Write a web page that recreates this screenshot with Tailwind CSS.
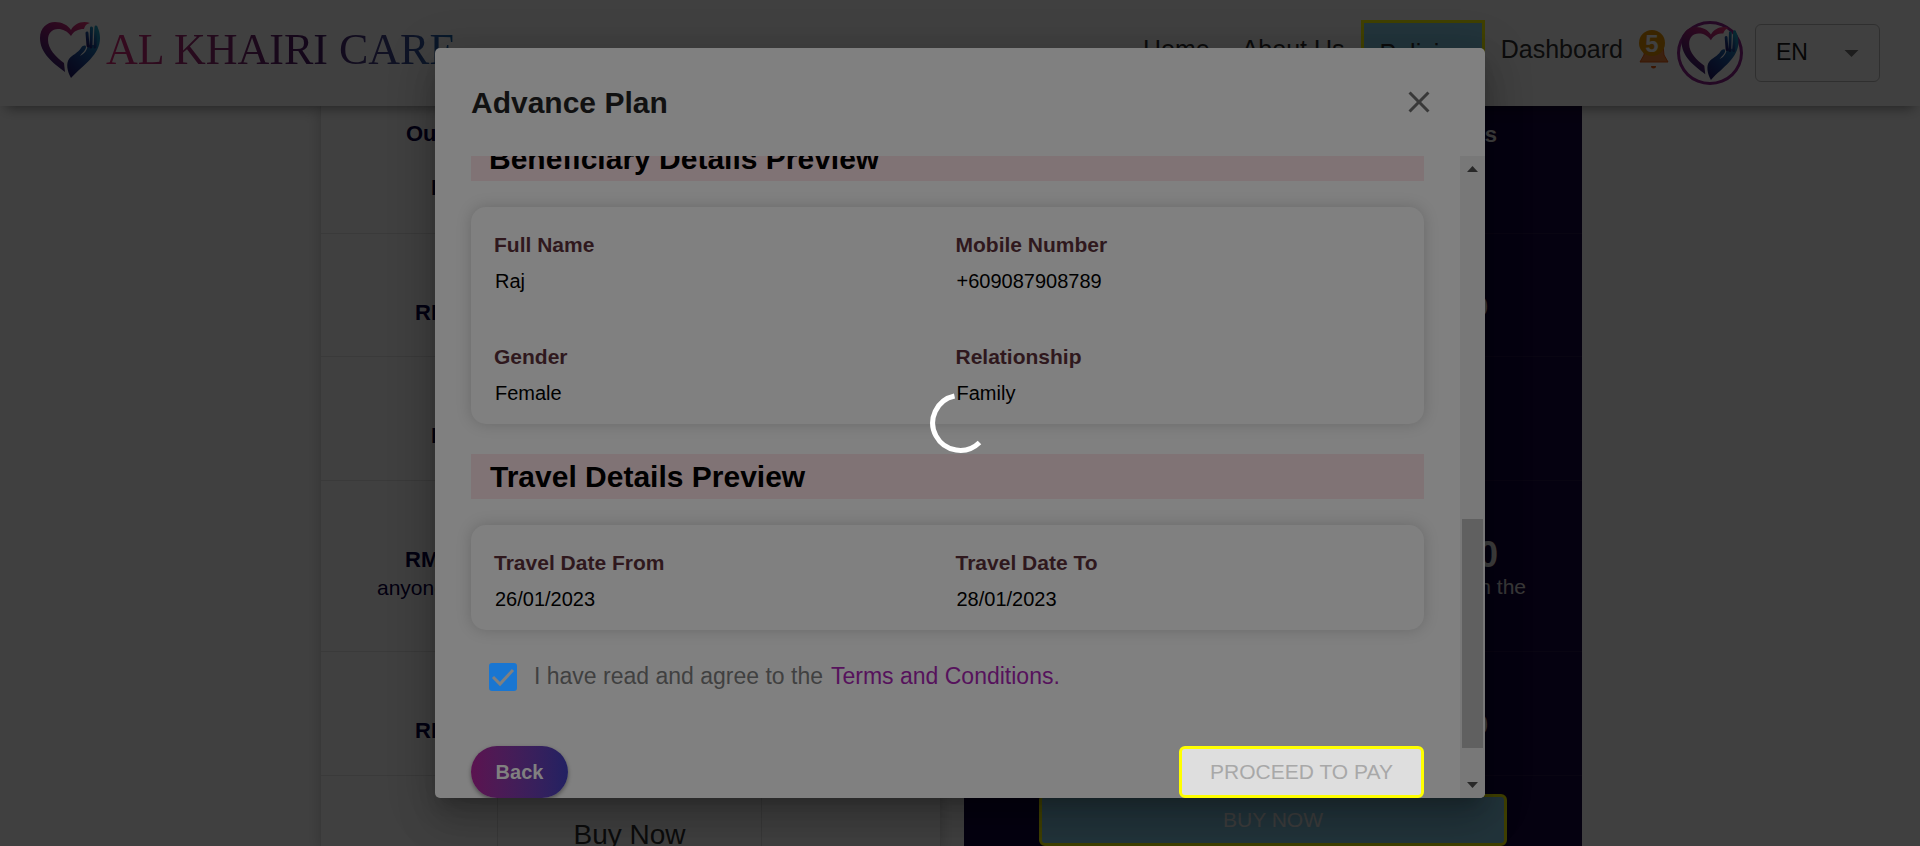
<!DOCTYPE html>
<html lang="en">
<head>
<meta charset="utf-8">
<title>Al Khairi Care</title>
<script src="https://cdn.jsdelivr.net/npm/@tailwindcss/browser@4"></script>
</head>
<body class="relative h-screen overflow-hidden bg-white font-['Liberation_Sans',Arial,sans-serif]">

<svg class="absolute size-0" aria-hidden="true">
  <defs>
    <linearGradient id="heartLeft" x1="1" y1="0" x2="0.3" y2="1">
      <stop offset="0" stop-color="#f03a78"/><stop offset="0.45" stop-color="#a0207c"/><stop offset="1" stop-color="#2b2270"/>
    </linearGradient>
    <linearGradient id="heartRight" x1="0.8" y1="0" x2="0.2" y2="1">
      <stop offset="0" stop-color="#22a0c4"/><stop offset="0.5" stop-color="#1d56a4"/><stop offset="1" stop-color="#201a6c"/>
    </linearGradient>
    <symbol id="mark" viewBox="0 0 60 57">
      <path fill="url(#heartLeft)" d="M31 15 C27 10 23 8 18 8 C12 8 8 12 8 19 C8 28 16 36 24 42 L25 51 C13 42 0 32 0 17 C0 7 7 1 15 1 C22 1 28 4 31 9 C34 3 42 -1 50 2 C46 3 45 5 44 8 C38 8 34 10 31 15 Z"/>
      <path fill="url(#heartRight)" d="M31 57 C27 50 26 42 29 38 C32 34 38 32 41 27 C43 24 46 24 46 26 C46 29 43 31 40 35 C46 32 47 28 48 24 L54 24 L55 6 C56 3 60 8 60 17 C60 34 44 43 31 57 Z"/>
      <path fill="none" stroke="url(#heartRight)" stroke-width="3" stroke-linecap="round" d="M47 12 L48 25 M51.500 7 L51 26 M56 6 L55 26"/>
    </symbol>
  </defs>
</svg>

<!-- Page behind the dialog -->
<div class="flex h-full flex-col overflow-hidden">
  <header class="relative z-10 flex h-[106px] shrink-0 items-start justify-between bg-white pr-10 pl-10 shadow-[0_8px_12px_-6px_rgba(0,0,0,0.45)]">
    <a href="#" class="flex pt-[21px]" aria-label="Al Khairi Care">
      <svg class="h-[57px] w-[60px]"><use href="#mark"/></svg>
      <span class="bg-linear-to-r from-[#e0287a] via-[#4a1a66] via-60% to-[#1668b0] bg-clip-text pl-1.5 font-['Liberation_Serif',serif] text-[44px] leading-[58px] font-normal text-transparent">AL KHAIRI CARE</span>
    </a>
    <nav class="flex items-start text-[25px] leading-8 text-[#333]">
      <a href="#" class="mt-[33px]">Home</a>
      <a href="#" class="mt-[33px] ml-8">About Us</a>
      <a href="#" class="mt-5 ml-4 border-[3px] border-[#ff0] bg-[#87ceeb] px-4 py-3.5">Policies</a>
      <a href="#" class="mt-[33px] ml-4">Dashboard</a>
      <button type="button" class="relative mt-[30px] ml-4 h-10 w-[30px]" aria-label="5 notifications">
        <svg class="h-10 w-[30px]" viewBox="0 0 30 40"><path d="M6 15h18l1 10 4 7H1l4-7z" fill="#f0843c" stroke="#e8590c"/><path d="M12 36h5a2.500 2.500 0 0 1-5 0z" fill="#e8590c"/></svg>
        <span class="absolute top-0 left-0 size-[26px] rounded-full bg-[#e59400] text-center text-2xl leading-[28px] font-bold text-white">5</span>
      </button>
      <a href="#" class="mt-[21px] ml-2 flex h-16 w-[66px] items-center justify-center rounded-[50%] border-[3px] border-[#8e248e]" aria-label="Profile">
        <svg class="h-[54px] w-[58px]"><use href="#mark"/></svg>
      </a>
      <div class="relative mt-6 ml-3">
        <select aria-label="Language" class="block h-[58px] w-[125px] appearance-none rounded-md border border-[#bbb] bg-transparent pb-0.5 pl-5 text-[23px] text-[#1a1a1a]"><option>EN</option></select>
        <svg class="pointer-events-none absolute top-[26px] right-[21px] h-[7px] w-[15px]" viewBox="0 0 14 7"><path d="M0 0h14l-7 7z" fill="#757575"/></svg>
      </div>
    </nav>
  </header>

  <main class="mx-auto flex w-full max-w-[1280px] flex-1 gap-[23px] text-[22px] leading-7 text-[#0c0044]">
    <section class="grid w-[621px] shrink-0 grid-rows-[128px_123px_124px_171px_124px_1fr] divide-y divide-[#e8e8e8] border-x border-[#e4e4e4] shadow-[0_0_14px_rgba(0,0,0,0.2)]">
      <div class="pt-3.5 font-bold"><p class="pl-[85px]">Ou</p><p class="pt-[26px] pl-[110px]">R</p></div>
      <div class="pt-[65px] pl-[94px] font-bold">RM</div>
      <div class="pt-[65px] pl-[110px] font-bold">R</div>
      <div class="pt-[65px] pl-[84px] font-bold">RM<p class="-ml-7 text-[21px] font-normal">anyone</p></div>
      <div class="pt-[65px] pl-[94px] font-bold">RM</div>
      <div class="grid grid-cols-[177px_264px_1fr] divide-x divide-[#e4e4e4]"><div></div><div class="pt-[45px] text-center text-[28px] text-[#333]"><a href="#">Buy Now</a></div><div></div></div>
    </section>
    <section class="grid w-[618px] shrink-0 grid-rows-[128px_123px_124px_171px_124px_1fr] divide-y divide-[#24154a] bg-[#170640] text-right text-white">
      <div class="pt-[15px] pr-[85px] font-bold">s</div>
      <div class="pt-[59px] pr-[94px] text-[28px] font-bold">0</div>
      <div></div>
      <div class="pt-[54px] font-bold"><p class="pr-[84px] text-4xl">0</p><p class="-mt-0.5 pr-14 text-[21px] leading-7 font-normal text-[#e0e0e0]">in the</p></div>
      <div class="pt-[59px] pr-[94px] text-[28px] font-bold">0</div>
      <div class="px-[75px] pt-[18px]"><button type="button" class="h-[52px] w-full rounded-md border-[3px] border-[#ff0] bg-[#87ceeb] text-[21px] text-[#f4f4f4]">BUY NOW</button></div>
    </section>
  </main>
</div>

<!-- Backdrop and dialog -->
<div class="absolute inset-0 z-20 flex items-center justify-center bg-black/75">
  <div role="dialog" aria-labelledby="plan" class="flex h-[750px] w-[1050px] flex-col overflow-hidden rounded-[5px] bg-[#808080] shadow-[0_11px_15px_-7px_rgba(0,0,0,0.2),0_24px_38px_3px_rgba(0,0,0,0.14),0_9px_46px_8px_rgba(0,0,0,0.12)]">
    <div class="flex h-[108px] shrink-0 items-center justify-between pr-12 pl-9">
      <h2 id="plan" class="pt-0.5 text-[30px] leading-9 font-bold text-[#111]">Advance Plan</h2>
      <button type="button" aria-label="Close"><svg class="size-9" viewBox="0 0 24 24" fill="#383838"><path d="M19 6.41 17.59 5 12 10.59 6.41 5 5 6.41 10.59 12 5 17.59 6.41 19 12 13.41 17.59 19 19 17.59 13.41 12z"/></svg></button>
    </div>
    <div class="flex min-h-0 flex-1">
      <div class="flex min-w-0 flex-1 flex-col justify-end overflow-hidden px-9">
        <h3 class="h-[45px] shrink-0 bg-[#807375] pl-[18px] text-[30px] leading-[45px] font-bold">Beneficiary Details Preview</h3>
        <dl class="mt-[26px] grid shrink-0 grid-cols-2 gap-y-10 rounded-[15px] bg-[#808080] pt-6 pr-[7px] pb-[9px] pl-[23px] shadow-[0_0_15px_rgba(0,0,0,0.18)]">
          <div><dt class="text-[21px] leading-7 font-bold text-[#2f181d]">Full Name</dt><dd class="py-[3px] pl-px text-xl leading-[38px]">Raj</dd></div>
          <div><dt class="text-[21px] leading-7 font-bold text-[#2f181d]">Mobile Number</dt><dd class="py-[3px] pl-px text-xl leading-[38px]">+609087908789</dd></div>
          <div><dt class="text-[21px] leading-7 font-bold text-[#2f181d]">Gender</dt><dd class="py-[3px] pl-px text-xl leading-[38px]">Female</dd></div>
          <div><dt class="text-[21px] leading-7 font-bold text-[#2f181d]">Relationship</dt><dd class="py-[3px] pl-px text-xl leading-[38px]">Family</dd></div>
        </dl>
        <h3 class="mt-[30px] h-[45px] shrink-0 bg-[#807375] pl-[19px] text-[30px] leading-[45px] font-bold">Travel Details Preview</h3>
        <dl class="mt-[26px] grid shrink-0 grid-cols-2 rounded-[15px] bg-[#808080] pt-6 pr-[7px] pb-[9px] pl-[23px] shadow-[0_0_15px_rgba(0,0,0,0.18)]">
          <div><dt class="text-[21px] leading-7 font-bold text-[#2f181d]">Travel Date From</dt><dd class="py-[3px] pl-px text-xl leading-[38px]">26/01/2023</dd></div>
          <div><dt class="text-[21px] leading-7 font-bold text-[#2f181d]">Travel Date To</dt><dd class="py-[3px] pl-px text-xl leading-[38px]">28/01/2023</dd></div>
        </dl>
        <div class="mt-[33px] flex h-[27px] shrink-0 items-center pl-[18px] text-[23px] text-[#404040]">
          <span class="relative size-[28px]">
            <input id="agree" type="checkbox" checked class="block size-[28px] appearance-none rounded-[3px] bg-[#1976d2]">
            <svg class="pointer-events-none absolute inset-0 size-[28px]" viewBox="0 0 28 28" fill="none" stroke="#808080" stroke-width="3"><path d="M4 14l7 7L24 7"/></svg>
          </span>
          <label for="agree" class="pl-[17px]">I have read and agree to the</label>
          <a href="#" class="pl-2 text-[#56125c]">Terms and Conditions.</a>
        </div>
        <div class="mt-14 flex h-[52px] shrink-0 justify-between">
          <button type="button" class="w-[97px] rounded-full bg-linear-to-r from-[#5b1250] to-[#222162] text-xl font-bold text-[#808080] shadow-[0_2px_4px_rgba(0,0,0,0.4)]">Back</button>
          <button type="button" disabled class="w-[245px] rounded-md border-[3px] border-[#ff0] bg-[#dedede] text-[21px] text-[#a8a8a8]">PROCEED TO PAY</button>
        </div>
      </div>
      <div class="flex w-[25px] shrink-0 flex-col items-center bg-[#787878]">
        <svg class="mt-2.5 h-1.5 w-[11px] shrink-0" viewBox="0 0 11 6"><path d="M5.500 0 11 6H0z" fill="#282828"/></svg>
        <div class="flex-1"></div>
        <div class="h-[229px] w-[21px] bg-[#606060]"></div>
        <svg class="mt-[34px] mb-2.5 h-1.5 w-[11px] shrink-0" viewBox="0 0 11 6"><path d="M0 0h11L5.500 6z" fill="#282828"/></svg>
      </div>
    </div>
  </div>
  <svg role="progressbar" aria-label="Loading" class="absolute size-[60px]" viewBox="0 0 60 60" fill="none" stroke="#fff" stroke-width="5"><path d="M24.500 3A27.500 27.500 0 1 0 49.500 49.500"/></svg>
</div>
</body>
</html>
